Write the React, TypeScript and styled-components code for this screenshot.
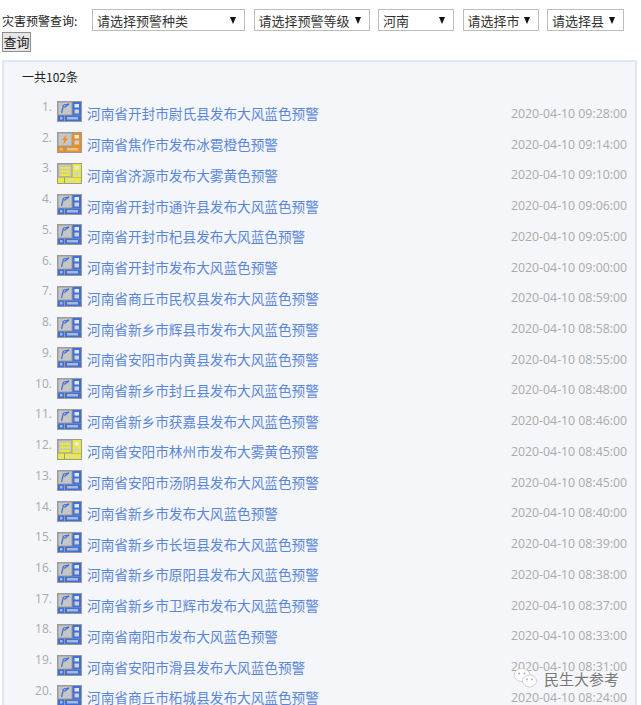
import { FC } from 'react';
import styled, { createGlobalStyle } from 'styled-components';

type Level = 'blue' | 'orange' | 'yellow';
type Warning = { title: string; time: string; level: Level };

const ROW_HEIGHT = 30.74;

const warnings: Warning[] = [
	{ title: '河南省开封市尉氏县发布大风蓝色预警', time: '2020-04-10 09:28:00', level: 'blue' },
	{ title: '河南省焦作市发布冰雹橙色预警', time: '2020-04-10 09:14:00', level: 'orange' },
	{ title: '河南省济源市发布大雾黄色预警', time: '2020-04-10 09:10:00', level: 'yellow' },
	{ title: '河南省开封市通许县发布大风蓝色预警', time: '2020-04-10 09:06:00', level: 'blue' },
	{ title: '河南省开封市杞县发布大风蓝色预警', time: '2020-04-10 09:05:00', level: 'blue' },
	{ title: '河南省开封市发布大风蓝色预警', time: '2020-04-10 09:00:00', level: 'blue' },
	{ title: '河南省商丘市民权县发布大风蓝色预警', time: '2020-04-10 08:59:00', level: 'blue' },
	{ title: '河南省新乡市辉县市发布大风蓝色预警', time: '2020-04-10 08:58:00', level: 'blue' },
	{ title: '河南省安阳市内黄县发布大风蓝色预警', time: '2020-04-10 08:55:00', level: 'blue' },
	{ title: '河南省新乡市封丘县发布大风蓝色预警', time: '2020-04-10 08:48:00', level: 'blue' },
	{ title: '河南省新乡市获嘉县发布大风蓝色预警', time: '2020-04-10 08:46:00', level: 'blue' },
	{ title: '河南省安阳市林州市发布大雾黄色预警', time: '2020-04-10 08:45:00', level: 'yellow' },
	{ title: '河南省安阳市汤阴县发布大风蓝色预警', time: '2020-04-10 08:45:00', level: 'blue' },
	{ title: '河南省新乡市发布大风蓝色预警', time: '2020-04-10 08:40:00', level: 'blue' },
	{ title: '河南省新乡市长垣县发布大风蓝色预警', time: '2020-04-10 08:39:00', level: 'blue' },
	{ title: '河南省新乡市原阳县发布大风蓝色预警', time: '2020-04-10 08:38:00', level: 'blue' },
	{ title: '河南省新乡市卫辉市发布大风蓝色预警', time: '2020-04-10 08:37:00', level: 'blue' },
	{ title: '河南省南阳市发布大风蓝色预警', time: '2020-04-10 08:33:00', level: 'blue' },
	{ title: '河南省安阳市滑县发布大风蓝色预警', time: '2020-04-10 08:31:00', level: 'blue' },
	{ title: '河南省商丘市柘城县发布大风蓝色预警', time: '2020-04-10 08:24:00', level: 'blue' },
];

const levelColors: Record<Level, string> = {
	blue: '#3f6fd8',
	orange: '#ee8f1c',
	yellow: '#ecea2e',
};

const filters = [
	{ label: '请选择预警种类', width: 153 },
	{ label: '请选择预警等级', width: 116 },
	{ label: '河南', width: 76 },
	{ label: '请选择市', width: 76 },
	{ label: '请选择县', width: 77 },
];

const GlobalStyle = createGlobalStyle`
	html, body {
		margin: 0;
		padding: 0;
		background: #fff;
	}
	body {
		font-family: 'Noto Sans CJK SC', 'Open Sans', sans-serif;
	}
`;

const StyledPage = styled.div`
	position: relative;
	width: 641px;
	height: 705px;
	overflow: hidden;
	padding: 9px 0 0 2px;
	box-sizing: border-box;
`;

const StyledFilters = styled.div`
	display: flex;
	align-items: center;
	height: 22px;
`;

const StyledFilterLabel = styled.span`
	width: 90px;
	font-size: 12px;
	color: #222;
`;

const StyledSelect = styled.div<{ width: number }>`
	display: flex;
	align-items: center;
	justify-content: space-between;
	box-sizing: border-box;
	width: ${({ width }) => width}px;
	height: 22px;
	margin-right: 8.5px;
	padding: 0 8px 0 4px;
	background: #fff;
	border: 1px solid #bdbdbd;
	font-size: 13px;
	color: #333;
`;

const StyledSelectArrow = styled.span`
	width: 0;
	height: 0;
	border-left: 3.5px solid transparent;
	border-right: 3.5px solid transparent;
	border-top: 7px solid #111;
`;

const StyledSearchButton = styled.button`
	display: block;
	box-sizing: border-box;
	width: 29px;
	height: 20px;
	margin-top: 1px;
	padding: 0;
	background: #e6e6e6;
	border: 1px solid #8e8e8e;
	font-family: inherit;
	font-size: 13px;
	line-height: 18px;
	color: #222;
`;

const StyledPanel = styled.div`
	box-sizing: border-box;
	width: 635px;
	height: 660px;
	margin-top: 8px;
	padding: 7px 0 0;
	background: #f4f6fa;
	border: 2px solid #dfe7f6;
	border-bottom: none;
`;

const StyledTotal = styled.div`
	padding-left: 18px;
	height: 24px;
	font-size: 12px;
	line-height: 16px;
	color: #222;
`;

const StyledList = styled.ol`
	list-style: none;
	margin: 5px 0 0;
	padding: 0 8px 0 0;
`;

const StyledRow = styled.li`
	display: flex;
	align-items: center;
	height: ${ROW_HEIGHT}px;
`;

const StyledIndex = styled.span`
	align-self: flex-start;
	width: 48px;
	margin-top: 1px;
	text-align: right;
	font-family: 'Open Sans', sans-serif;
	font-size: 12px;
	line-height: 16px;
	color: #aaa;
`;

const StyledIcon = styled.svg`
	flex: none;
	margin-left: 5px;
	margin-top: -3px;
`;

const StyledLink = styled.a`
	flex: 1;
	margin-left: 5px;
	font-size: 13.65px;
	line-height: 18px;
	color: #5a86d8;
	text-decoration: none;
`;

const StyledTime = styled.span`
	font-family: 'Open Sans', sans-serif;
	font-size: 12.3px;
	color: #aaa;
`;

const StyledWatermark = styled.div`
	position: absolute;
	left: 513px;
	top: 667px;
	display: flex;
	align-items: center;
	gap: 6px;
	font-size: 15px;
	color: #777;
	text-shadow: 0 0 2px #fff;
`;

const WarningIcon: FC<{ level: Level }> = ({ level }) => {
	const color = levelColors[level];

	return (
		<StyledIcon width="25" height="21" viewBox="0 0 25 21">
			<rect x="0" y="0" width="25" height="21" fill="#9a9a9a" />
			<rect x="1.5" y="1.5" width="13" height="12" fill="#c6c6c6" />
			<rect x="15.5" y="1" width="8.5" height="13" fill={color} />
			<rect x="1" y="14.5" width="23" height="5.5" fill={color} />
			<rect x="7" y="14.5" width="1" height="5.5" fill="#9a9a9a" />
			<rect x="17.5" y="3" width="4.5" height="3.5" fill="#e4e8f2" />
			<rect x="17.5" y="8.5" width="4.5" height="4" fill="#d0d0d0" />
			<rect x="3" y="16" width="2.5" height="2.5" fill="#d8d8d8" opacity="0.7" />
			<rect x="10" y="16" width="11" height="2.5" fill="#d8d8d8" opacity="0.7" />
			{level === 'blue' && (
				<path d="M4.5 12 L6.5 4 M6.5 4 L12 3 L7.2 6.5" fill="none" stroke={color} strokeWidth="1.2" />
			)}
			{level === 'orange' && (
				<path d="M9.5 2.5 L5 8 L7.5 8 L6 13 L11 6.5 L8.5 6.5 Z" fill={color} />
			)}
			{level === 'yellow' && (
				<path d="M3 4h10v2H3z M3 7.5h10v2H3z M3 11h10v2H3z" fill={color} />
			)}
		</StyledIcon>
	);
};

const WechatMark: FC = () => (
	<svg width="25" height="22" viewBox="0 0 25 22">
		<ellipse cx="9" cy="8" rx="8" ry="6.5" fill="#fff" stroke="#c4c4c4" strokeWidth="0.8" />
		<ellipse cx="16.5" cy="14" rx="7" ry="6" fill="#fff" stroke="#c4c4c4" strokeWidth="0.8" />
		<circle cx="6" cy="6.5" r="1" fill="#aaa" />
		<circle cx="11.5" cy="6.5" r="1" fill="#aaa" />
		<circle cx="14" cy="12.5" r="0.9" fill="#aaa" />
		<circle cx="19" cy="12.5" r="0.9" fill="#aaa" />
	</svg>
);

const App: FC = () => {
	return (
		<StyledPage>
			<GlobalStyle />
			<StyledFilters>
				<StyledFilterLabel>灾害预警查询:</StyledFilterLabel>
				{filters.map((filter) => (
					<StyledSelect key={filter.label} width={filter.width}>
						{filter.label}
						<StyledSelectArrow />
					</StyledSelect>
				))}
			</StyledFilters>
			<StyledSearchButton>查询</StyledSearchButton>

			<StyledPanel>
				<StyledTotal>一共102条</StyledTotal>
				<StyledList>
					{warnings.map((warning, index) => (
						<StyledRow key={`${warning.title}-${index}`}>
							<StyledIndex>{index + 1}.</StyledIndex>
							<WarningIcon level={warning.level} />
							<StyledLink href="#">{warning.title}</StyledLink>
							<StyledTime>{warning.time}</StyledTime>
						</StyledRow>
					))}
				</StyledList>
			</StyledPanel>

			<StyledWatermark>
				<WechatMark />
				民生大参考
			</StyledWatermark>
		</StyledPage>
	);
};

export default App;
